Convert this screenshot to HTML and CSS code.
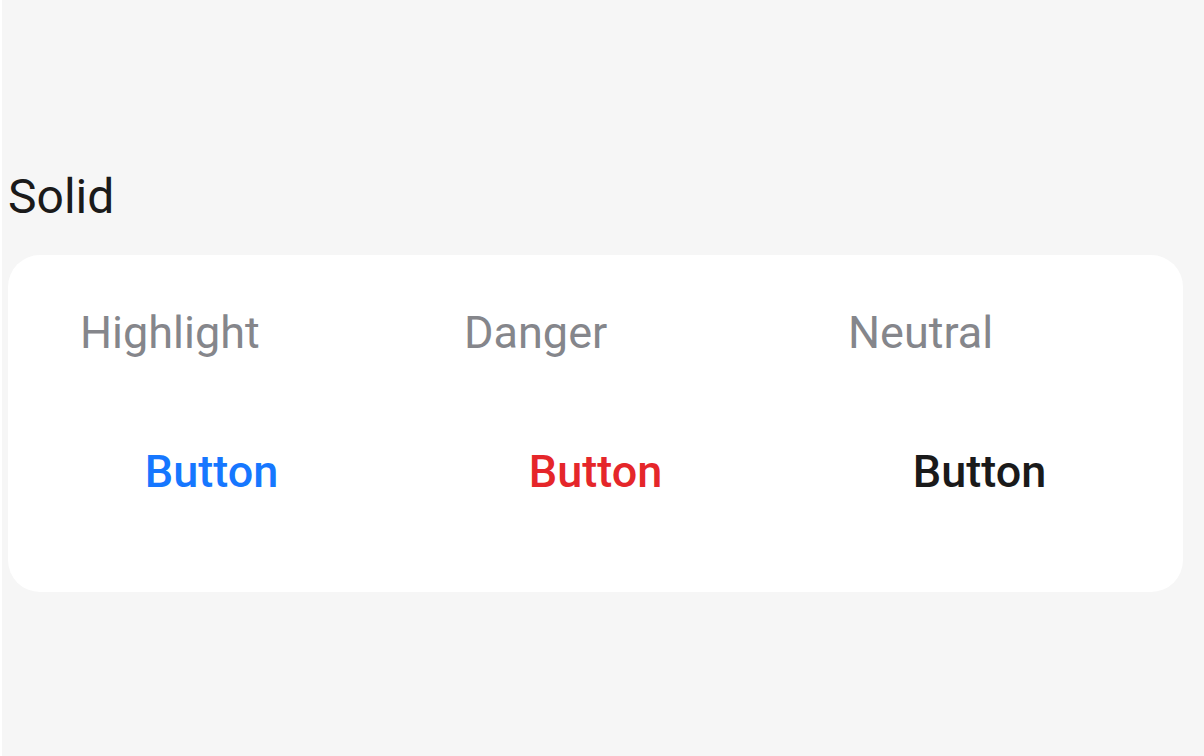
FILE: index.html
```html
<!DOCTYPE html>
<html lang="en">
<head>
<meta charset="utf-8">
<title>Solid buttons</title>
<link rel="stylesheet" href="styles.css">
</head>
<body>
  <main class="page">
    <h2 class="section-title">Solid</h2>
    <section class="card">
      <div class="col">
        <div class="col-label">Highlight</div>
        <button class="btn btn-highlight" type="button">Button</button>
      </div>
      <div class="col">
        <div class="col-label">Danger</div>
        <button class="btn btn-danger" type="button">Button</button>
      </div>
      <div class="col">
        <div class="col-label">Neutral</div>
        <button class="btn btn-neutral" type="button">Button</button>
      </div>
    </section>
  </main>
</body>
</html>
```

FILE: styles.css
```css
html {
  background: #ffffff;
}

body {
  margin: 0 0 0 2px;
  min-height: 100vh;
  background: #f6f6f6;
  font-family: Roboto, "Liberation Sans", sans-serif;
}

.page {
  padding: 169px 21px 0 6px;
}

.section-title {
  margin: 0 0 30px 0;
  font-size: 48px;
  font-weight: 400;
  line-height: 56px;
  color: #1a1a1a;
}

.card {
  background: #ffffff;
  border-radius: 32px;
  padding: 51px 0 70px 72px;
  display: grid;
  grid-template-columns: 384px 384px 1fr;
}

.col {
  display: flex;
  flex-direction: column;
  align-items: flex-start;
}

.col-label {
  font-size: 45px;
  line-height: 53px;
  color: #85868b;
  margin-bottom: 62px;
}

.btn {
  width: 263px;
  padding: 24px 0;
  border: 0;
  background: transparent;
  font-family: Roboto, "Liberation Sans", sans-serif;
  font-size: 45px;
  font-weight: 500;
  line-height: 53px;
  text-align: center;
  cursor: pointer;
}

.btn-highlight { color: #1677ff; }
.btn-danger { color: #e5262a; }
.btn-neutral { color: #1a1a1a; }
```
